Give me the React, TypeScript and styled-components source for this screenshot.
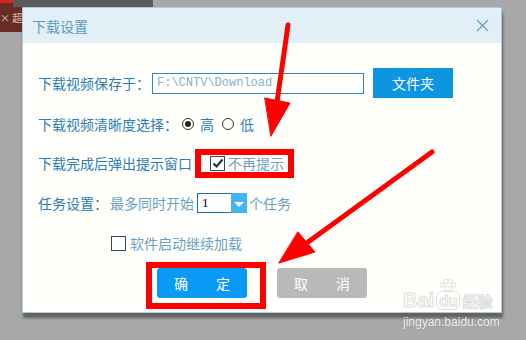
import React from "react";
import styled, { createGlobalStyle } from "styled-components";

const GlobalStyle = createGlobalStyle`
  html, body {
    margin: 0;
    padding: 0;
    background: #a8a8a8;
  }
  body {
    font-family: "Noto Sans CJK SC", "Noto Sans", sans-serif;
  }
`;

const Desktop = styled.div`
  position: relative;
  width: 526px;
  height: 340px;
  overflow: hidden;
  background: #a8a8a8;
`;

// what shows of the page behind the dialog
const RedTab = styled.div`
  position: absolute;
  left: 0;
  top: 0;
  width: 13px;
  height: 3px;
  background: #d8261d;
`;

const MaroonTab = styled.div`
  position: absolute;
  left: 0;
  top: 3px;
  width: 22px;
  height: 29px;
  background: #6a2b27;
  color: #d9c2bf;
  font-size: 10px;
  line-height: 29px;
  white-space: nowrap;
`;

const DarkStrip = styled.div`
  position: absolute;
  left: 13px;
  top: 0;
  width: 140px;
  height: 7px;
  background: #5a5a5a;
`;

const Dialog = styled.div`
  position: absolute;
  left: 22px;
  top: 7px;
  width: 480px;
  height: 306px;
  box-sizing: border-box;
  border: 1px solid #a6cbe2;
  border-radius: 3px 3px 0 0;
  background: #fffffb;
  box-shadow: 1px 5px 3px rgba(40, 40, 40, 0.55);
  display: flex;
  flex-direction: column;
`;

const TitleBar = styled.div`
  height: 35px;
  flex: none;
  display: flex;
  align-items: center;
  justify-content: space-between;
  padding: 0 12px 0 9px;
  background: #e3eff6;
`;

const Title = styled.span`
  font-size: 14px;
  color: #5b9bc1;
`;

const Close = styled.svg`
  width: 13px;
  height: 13px;
`;

const Body = styled.div`
  display: flex;
  flex-direction: column;
  padding: 25px 0 0 15px;
`;

const Row = styled.div<{ $mt?: number; $h?: number; $indent?: number }>`
  display: flex;
  align-items: center;
  height: ${(p) => p.$h ?? 20}px;
  margin-top: ${(p) => p.$mt ?? 0}px;
  padding-left: ${(p) => p.$indent ?? 0}px;
`;

const Label = styled.span<{ $light?: boolean; $ml?: number }>`
  font-size: 14px;
  line-height: 20px;
  white-space: nowrap;
  color: ${(p) => (p.$light ? "#6c9fc3" : "#2e7cb4")};
  margin-left: ${(p) => p.$ml ?? 0}px;
`;

const PathInput = styled.div`
  margin-left: 2px;
  width: 212px;
  height: 21px;
  box-sizing: border-box;
  border: 1px solid #3385bb;
  padding-left: 4px;
  font-family: "Liberation Mono", monospace;
  font-size: 12px;
  line-height: 19px;
  color: #86b2d2;
`;

const FlatButton = styled.button<{ $grey?: boolean; $w?: number; $ml?: number }>`
  width: ${(p) => p.$w ?? 90}px;
  height: 30px;
  margin-left: ${(p) => p.$ml ?? 0}px;
  border: none;
  border-radius: ${(p) => (p.$w === 80 ? 0 : 3)}px;
  background: ${(p) => (p.$grey ? "#b9b9b9" : p.$w === 80 ? "#0e95e2" : "#0a9af6")};
  color: #ffffff;
  font-family: inherit;
  font-size: 14px;
  display: flex;
  align-items: center;
  justify-content: center;
  gap: 28px;
  padding: 0;
`;

const Radio = styled.span<{ $on?: boolean; $ml?: number }>`
  width: 12px;
  height: 12px;
  box-sizing: border-box;
  border: 1px solid #333;
  border-radius: 50%;
  margin-left: ${(p) => p.$ml ?? 0}px;
  display: flex;
  align-items: center;
  justify-content: center;
  &::after {
    content: "";
    width: 6px;
    height: 6px;
    border-radius: 50%;
    background: ${(p) => (p.$on ? "#222" : "transparent")};
  }
`;

const Box = styled.span<{ $ml?: number }>`
  width: 15px;
  height: 15px;
  box-sizing: border-box;
  border: 1px solid #30495c;
  background: #fff;
  margin-left: ${(p) => p.$ml ?? 0}px;
  display: flex;
  align-items: center;
  justify-content: center;
`;

const Select = styled.div`
  margin-left: 3px;
  width: 50px;
  height: 20px;
  display: flex;
`;

const SelectValue = styled.div`
  flex: 1;
  box-sizing: border-box;
  border: 1px solid #1e6cae;
  border-right: none;
  background: #fff;
  padding-left: 4px;
  font-family: "Liberation Serif", serif;
  font-size: 13px;
  line-height: 18px;
  color: #000;
`;

const SelectArrow = styled.div`
  width: 16px;
  background: #45b4f4;
  display: flex;
  align-items: center;
  justify-content: center;
  &::after {
    content: "";
    border-left: 5px solid transparent;
    border-right: 5px solid transparent;
    border-top: 5px solid #fff;
    margin-top: 2px;
  }
`;

const Actions = styled.div`
  display: flex;
  gap: 30px;
  margin-top: 15px;
  padding-left: 119px;
`;

const Highlight = styled.div<{ $x: number; $y: number; $w: number; $h: number }>`
  position: absolute;
  left: ${(p) => p.$x}px;
  top: ${(p) => p.$y}px;
  width: ${(p) => p.$w}px;
  height: ${(p) => p.$h}px;
  box-sizing: border-box;
  border: 6px solid #ff0000;
  pointer-events: none;
`;

const Arrows = styled.svg`
  position: absolute;
  left: 0;
  top: 0;
  pointer-events: none;
`;

const Watermark = styled.div`
  position: absolute;
  left: 403px;
  top: 281px;
  display: flex;
  flex-direction: column;
  align-items: flex-start;
  white-space: nowrap;
  pointer-events: none;
`;

const Mark = styled.div`
  display: flex;
  align-items: flex-end;
  height: 30px;
  font-family: "Liberation Sans", sans-serif;
  font-weight: bold;
  font-size: 20px;
  line-height: 22px;
  color: rgba(255, 255, 255, 0.6);
  -webkit-text-stroke: 1px #dedede;
`;

const Du = styled.span`
  position: relative;
  margin: 0 2px 1px;
  padding: 0 2px;
  border: 1px solid #dedede;
  border-radius: 6px;
  font-size: 15px;
  line-height: 17px;
`;

const Paw = styled.svg`
  position: absolute;
  left: 2px;
  top: -13px;
`;

const MarkCn = styled.span`
  font-family: "Noto Sans CJK SC", sans-serif;
  font-size: 15px;
  line-height: 20px;
`;

const Domain = styled.div`
  margin-top: 4px;
  font-family: "Liberation Sans", sans-serif;
  font-size: 12px;
  color: #f4f4f4;
  text-shadow: 0 0 1px rgba(0, 0, 0, 0.3);
`;

export default function App() {
  return (
    <>
      <GlobalStyle />
      <Desktop>
        <RedTab />
        <MaroonTab>× 超</MaroonTab>
        <DarkStrip />
        <Dialog>
          <TitleBar>
            <Title>下载设置</Title>
            <Close viewBox="0 0 13 13">
              <path d="M1 1 L12 12 M12 1 L1 12" stroke="#6aa0c1" strokeWidth="1.4" fill="none" />
            </Close>
          </TitleBar>
          <Body>
            <Row $h={30}>
              <Label>下载视频保存于：</Label>
              <PathInput>F:\CNTV\Download</PathInput>
              <FlatButton $w={80} $ml={9}>文件夹</FlatButton>
            </Row>
            <Row $mt={16}>
              <Label>下载视频清晰度选择：</Label>
              <Radio $on $ml={4} />
              <Label $ml={6}>高</Label>
              <Radio $ml={8} />
              <Label $ml={6}>低</Label>
            </Row>
            <Row $mt={19}>
              <Label>下载完成后弹出提示窗口</Label>
              <Box $ml={18}>
                <svg width="12" height="12" viewBox="0 0 12 12">
                  <path d="M1.5 6.5 L4.5 9.5 L10.5 2.5" stroke="#1c2c44" strokeWidth="2" fill="none" />
                </svg>
              </Box>
              <Label $light $ml={3}>不再提示</Label>
            </Row>
            <Row $mt={20}>
              <Label>任务设置：</Label>
              <Label $light $ml={2}>最多同时开始</Label>
              <Select>
                <SelectValue>1</SelectValue>
                <SelectArrow />
              </Select>
              <Label $light $ml={2}>个任务</Label>
            </Row>
            <Row $mt={20} $indent={73}>
              <Box />
              <Label $light $ml={4}>软件启动继续加载</Label>
            </Row>
            <Actions>
              <FlatButton>
                <span>确</span>
                <span>定</span>
              </FlatButton>
              <FlatButton $grey>
                <span>取</span>
                <span>消</span>
              </FlatButton>
            </Actions>
          </Body>
        </Dialog>

        <Watermark>
          <Mark>
            Bai
            <Du>
              <Paw width="18" height="12" viewBox="0 0 18 12">
                <g fill="none" stroke="#dedede" strokeWidth="1">
                  <ellipse cx="3" cy="6" rx="2" ry="2.5" />
                  <ellipse cx="7" cy="2.5" rx="2" ry="2.2" />
                  <ellipse cx="11.5" cy="2.5" rx="2" ry="2.2" />
                  <ellipse cx="15" cy="6" rx="2" ry="2.5" />
                  <ellipse cx="9" cy="9.5" rx="3.5" ry="2.3" />
                </g>
              </Paw>
              du
            </Du>
            <MarkCn>经验</MarkCn>
          </Mark>
          <Domain>jingyan.baidu.com</Domain>
        </Watermark>

        <Highlight $x={195} $y={149} $w={99} $h={29} />
        <Highlight $x={146} $y={262} $w={120} $h={47} />

        <Arrows width="526" height="340" viewBox="0 0 526 340">
          <g fill="#ff0000" stroke="#ff0000" strokeLinecap="round" strokeLinejoin="round">
            <line x1="288" y1="25" x2="277" y2="102" strokeWidth="5" />
            <polygon points="265,98 290,103 271,136" strokeWidth="1" />
            <line x1="432" y1="152" x2="304" y2="245" strokeWidth="5" />
            <polygon points="298,232 315,252 279,263" strokeWidth="1" />
          </g>
        </Arrows>
      </Desktop>
    </>
  );
}
